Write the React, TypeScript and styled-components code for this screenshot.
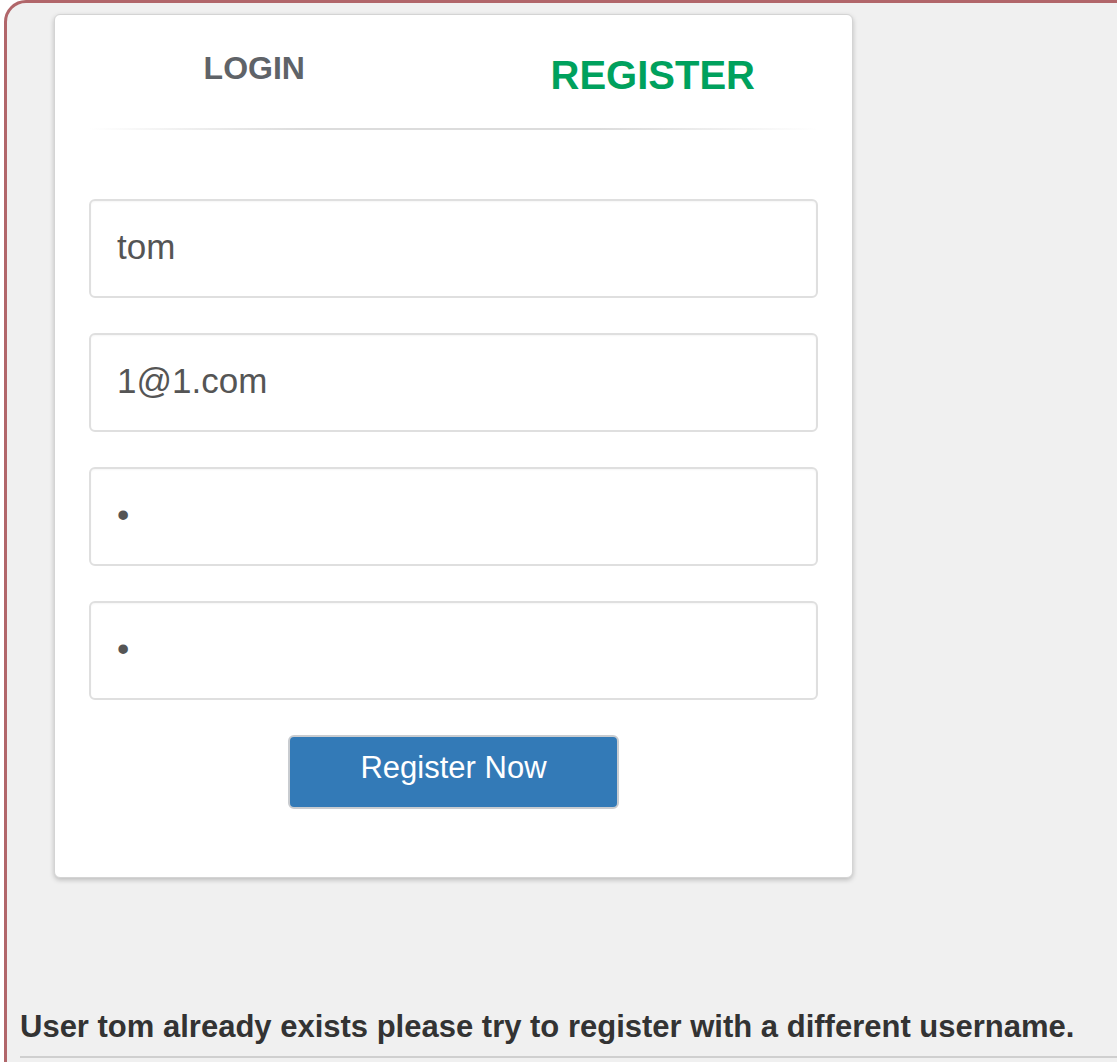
import React from 'react'
import styled, { createGlobalStyle } from 'styled-components'

const GlobalStyle = createGlobalStyle`
  html, body {
    margin: 0;
    padding: 0;
    background: #ffffff;
    font-family: "Liberation Sans", Arial, Helvetica, sans-serif;
    overflow: hidden;
  }
`

const Frame = styled.div`
  margin-left: 4px;
  width: 1140px;
  height: 1100px;
  border: 3px solid #b1666a;
  border-radius: 22px;
  background: #f0f0f0;
  box-sizing: border-box;
  padding: 11px 0 0 47px;
`

const Card = styled.div`
  width: 799px;
  box-sizing: border-box;
  background: #fff;
  border: 1px solid #d4d4d4;
  border-radius: 6px;
  box-shadow: 0 2px 5px rgba(0, 0, 0, 0.22);
  padding: 0 34px 68px;
`

const Tabs = styled.div`
  display: grid;
  grid-template-columns: 1fr 1fr;
  margin: 0 -34px;
  height: 113px;
`

const Tab = styled.div<{ $active?: boolean }>`
  text-align: center;
  font-weight: bold;
  font-size: ${p => (p.$active ? '40px' : '32px')};
  color: ${p => (p.$active ? '#00a15d' : '#5f6368')};
  padding-top: ${p => (p.$active ? '40px' : '37px')};
  line-height: 1;
`

const Divider = styled.div`
  height: 2px;
  background: linear-gradient(to right, rgba(221, 221, 221, 0), #dcdcdc 30%, #dcdcdc 70%, rgba(221, 221, 221, 0));
  margin-bottom: 69px;
`

const Form = styled.form`
  display: flex;
  flex-direction: column;
  gap: 35px;
`

const Field = styled.input`
  display: block;
  width: 100%;
  height: 99px;
  box-sizing: border-box;
  border: 2px solid #dfdfdf;
  border-radius: 6px;
  padding: 0 26px 4px;
  font-family: "Liberation Sans", Arial, sans-serif;
  font-size: 35px;
  color: #555;
  background: #fff;
  outline: none;
  box-shadow: inset 0 1px 2px rgba(0, 0, 0, 0.04);
`

const ButtonRow = styled.div`
  display: flex;
  justify-content: center;
`

const SubmitButton = styled.button`
  width: 331px;
  height: 74px;
  padding: 0 0 8px;
  background: #337ab7;
  border: 2px solid #c9ccd0;
  border-radius: 6px;
  color: #fff;
  font-family: "Liberation Sans", Arial, sans-serif;
  font-size: 31px;
  cursor: pointer;
`

const Message = styled.div`
  margin: 129px 0 0 -34px;
  font-weight: bold;
  font-size: 31px;
  color: #333;
  line-height: 40px;
  padding-bottom: 9px;
  border-bottom: 2px solid #cfcfcf;
  white-space: nowrap;
`

export default function App() {
  return (
    <>
      <GlobalStyle />
      <Frame>
        <Card>
          <Tabs>
            <Tab>LOGIN</Tab>
            <Tab $active>REGISTER</Tab>
          </Tabs>
          <Divider />
          <Form onSubmit={e => e.preventDefault()}>
            <Field type="text" defaultValue="tom" />
            <Field type="email" defaultValue="1@1.com" />
            <Field type="password" defaultValue="x" />
            <Field type="password" defaultValue="x" />
            <ButtonRow>
              <SubmitButton type="submit">Register Now</SubmitButton>
            </ButtonRow>
          </Form>
        </Card>
        <Message>User tom already exists please try to register with a different username.</Message>
      </Frame>
    </>
  )
}
